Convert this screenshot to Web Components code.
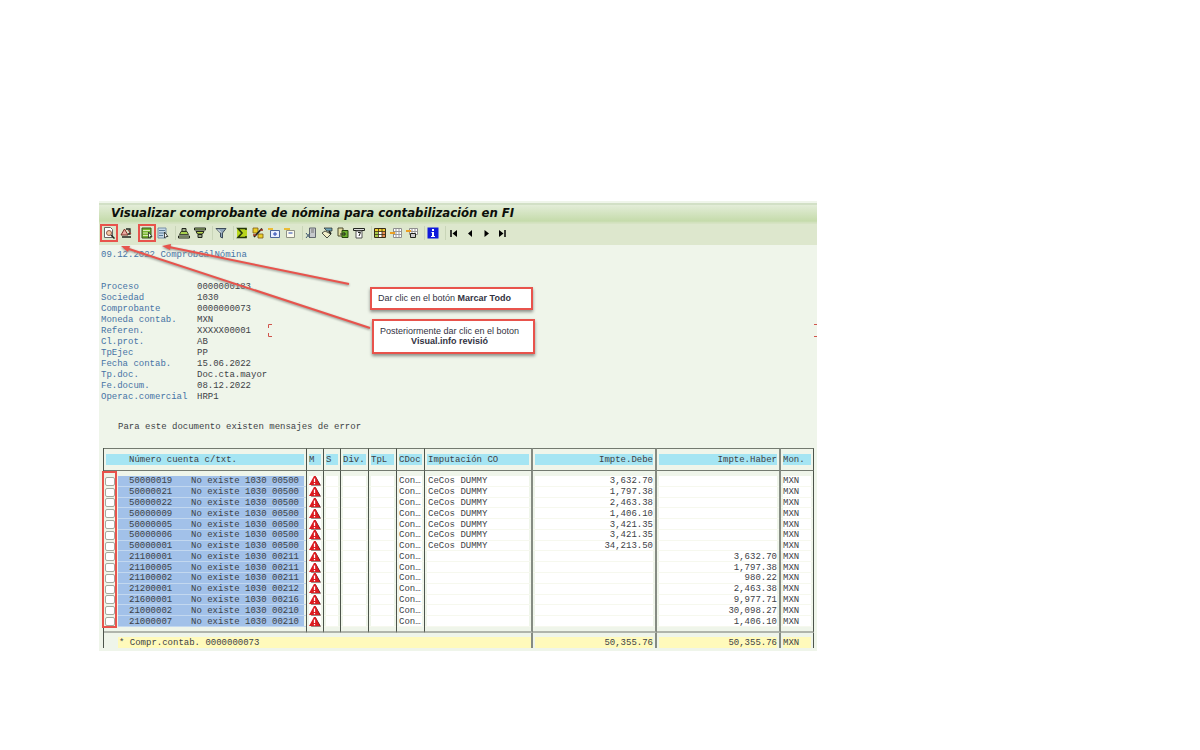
<!DOCTYPE html>
<html lang="es">
<head>
<meta charset="utf-8">
<title>Visualizar comprobante de nómina para contabilización en FI</title>
<style>
  html { background: #fff; }
  body {
    margin: 0;
    display: grid;
    grid-template-columns: 99fr 718fr 383fr;
    padding: 201px 0 96px;
    font-family: "Liberation Mono", monospace;
    font-size: 9px;
    line-height: 11px;
    color: #3d4246;
  }
  voucher-window { grid-column: 2; }
</style>
</head>
<body>
<voucher-window>
  <title-bar slot="title">Visualizar comprobante de nómina para contabilización en FI</title-bar>
  <tool-bar slot="tools"></tool-bar>
  <voucher-header></voucher-header>
  <posting-table></posting-table>
  <red-arrows slot="notes"></red-arrows>
  <note-box slot="notes" class="first">Dar clic en el botón <b>Marcar Todo</b></note-box>
  <note-box slot="notes" class="second">Posteriormente dar clic en el boton<br><b>Visual.info revisió</b></note-box>
</voucher-window>

<script>
class BaseElement extends HTMLElement {
  connectedCallback() {
    if (this.shadowRoot) return;
    this.attachShadow({ mode: "open" }).innerHTML = this.render();
  }
}

customElements.define("voucher-window", class extends BaseElement {
  render() {
    return `<style>
      :host { display: block; position: relative; background: #eff5ea; }
      .body { padding: 5px 3px 3px 2px; }
      ::slotted(note-box) { position: absolute; }
      ::slotted(.first) { left: 271px; top: 86px; }
      ::slotted(.second) { left: 273px; top: 118px; text-align: center; }
    </style>
    <slot name="title"></slot><slot name="tools"></slot>
    <div class="body"><slot></slot></div>
    <slot name="notes"></slot>`;
  }
});

customElements.define("title-bar", class extends BaseElement {
  render() {
    return `<style>
      :host { display: block; padding-top: 2px; }
      h1 {
        margin: 0; padding-left: 12px; box-sizing: border-box; height: 21px;
        font: italic bold 13px/20px "DejaVu Sans Condensed", "DejaVu Sans", sans-serif; color: #0c0f0a; white-space: nowrap;
        background: linear-gradient(#d2e0c6 0 2px, #e3edd8 2px, #c5dbab 18px, #d6e3c3 20px);
      }
    </style><h1><slot></slot></h1>`;
  }
});

const K = "#22261f";
const grid = (x, y, w, h, c) =>
  `<path d="M${x} ${y}h${w}v${h}h-${w}z" fill="#fff" stroke="${c}"/>`;
const ICONS = {
  "Visual.info revisión": `<path d="M1.500 .5h6l2 2v8h-8z" fill="#fff" stroke="#666"/><circle cx="6" cy="6" r="2.500" fill="#f6c9a4" stroke="#8a5c48"/><path d="M8 8l3.500 3.500" stroke="${K}" stroke-width="1.500"/>`,
  "Mensajes": `<path d="M1 8L4.500 2 8 8z" fill="#e9a8a0" stroke="#7b3028"/><path d="M6 2h4v5H8M2 10h9" fill="none" stroke="${K}" stroke-width="1.300"/><path d="M8 3l3 4" stroke="#a83832"/>`,
  "Marcar todo": `<path d="M1 1h9v10H1z" fill="#77b52f" stroke="#39541d"/><path d="M2 3.500h7M2 6h5M2 8.500h5" stroke="#d8ecb4"/><path d="M7.500 5v6l1.500-1.500h2z" fill="#fff" stroke="${K}" stroke-width=".8"/>`,
  "Desmarcar todo": `<path d="M1 1h8v10H1z" fill="#c5d8e6" stroke="#7890a4"/><path d="M2 3.500h6M2 6h5M2 8.500h4" stroke="#587a96"/><path d="M7.500 5v6l1.500-1.500h2z" fill="#fff" stroke="${K}" stroke-width=".8"/>`,
  "Orden ascendente": `<path d="M4 1.500h4v3H4z" fill="#9cad89" stroke="${K}"/><path d="M3 4.500h6l1.500 3h-9z" fill="#a8d04e" stroke="${K}" stroke-width=".8"/><path d="M.5 9h11v2H.5z" fill="#c8dca8" stroke="${K}"/>`,
  "Orden descendente": `<path d="M.5 1h11v2H.5z" fill="#a8c878" stroke="${K}"/><path d="M2 4.500h8l-1.500 2.500h-5z" fill="#b9d84e" stroke="${K}"/><path d="M4 7.500h4v3H4z" fill="#9cad89" stroke="${K}"/>`,
  "Filtro": `<path d="M1 1.500h10L7.500 6v5l-2-1V6z" fill="#8ea5b8" stroke="#3d4c5a"/><path d="M3 2.500l3 3" stroke="#fff"/>`,
  "Total": `<path d="M1 1h10v10H1z" fill="#b8d61c"/><path d="M10 3V1.500H2L6 6l-4 4.500h8V9" fill="none" stroke="#26380c" stroke-width="1.600"/>`,
  "Subtotal": `<path d="M1 1h5v5H1zM6 7h5v4H6z" fill="#e9cf28" stroke="#7d5913" stroke-width=".8"/><path d="M2 10L10 1.500" stroke="${K}" stroke-width="1.800"/><path d="M8 3h3M1 8h3" stroke="#9a321f" stroke-width="1.500"/>`,
  "Expandir": `<path d="M0 1h5v2H0z" fill="#eabc36"/><path d="M2.500 3.500h9v7h-9z" fill="#e9f0ff" stroke="#4b6598"/><path d="M7 5v4M5 7h4" stroke="#2647b1"/>`,
  "Comprimir": `<path d="M0 1h6v2H0z" fill="#eabc36"/><path d="M2.500 3.500h8v7h-8z" fill="#fbfbed" stroke="#8f9285"/><path d="M4.500 6h4" stroke="#2647b1"/>`,
  "Vista": `<path d="M4.500 1h6v9.500h-6z" fill="#c6c9cc" stroke="#62686e"/><path d="M6 3h3M6 5h3" stroke="#777"/><path d="M1 6l4 5M5 6l-4 5" stroke="#3e5970"/>`,
  "Enviar": `<path d="M3 1h8v3H6z" fill="#70a6ba" stroke="${K}" stroke-width=".7"/><path d="M1 6l3-2 6 3-4 4z" fill="#f1eec7" stroke="${K}" stroke-width=".8"/><path d="M8 4l2 3" stroke="${K}" stroke-width="1.500"/>`,
  "Exportar": `<path d="M1 1h5v8H1z" fill="#e4e0a4" stroke="#4a4a2c"/><path d="M5 3.500h6v7H5z" fill="#6aaf2c" stroke="#27460f"/><path d="M3 7h5M6.500 5l2 2-2 2" stroke="${K}" fill="none"/>`,
  "Plantilla": `<path d="M.5 1.500h11v2H.5z" fill="#ddd" stroke="${K}"/><path d="M3 4h6v7H3z" fill="#fff" stroke="#555"/><path d="M5 5.500h2.500L6 9" fill="none" stroke="${K}"/>`,
  "Layout": grid(.5, 1.500, 11, 9, "#382e18") + `<path d="M1 2h10v3H1z" fill="#f5d232"/><path d="M1 5h3v5H1z" fill="#a8cc48"/><path d="M8 5h3v5H8z" fill="#e98f54"/><path d="M4.500 1v10M8 1v10M0 4.500h12M0 7.500h12" stroke="#382e18" stroke-width=".8"/>`,
  "Seleccionar layout": grid(3.500, 1.500, 8, 9, "#8e8e8e") + `<path d="M6 2v8M9 2v8M4 4.500h7M4 7.500h7" stroke="#999"/><path d="M0 5h5v2H0z" fill="#ec9f22"/>`,
  "Grabar layout": grid(3.500, 1.500, 8, 6, "#8e8e8e") + `<path d="M6 2v5M9 2v5M4 4.500h7" stroke="#999"/><path d="M0 3h5v2H0z" fill="#ec9f22"/><path d="M4.500 6.500h5v4h-5z" fill="#ccc" stroke="${K}"/>`,
  "Información": `<path d="M.5 .5h11v11H.5z" fill="#0f19db"/><path d="M5 2h2v2H5zM4.500 5H7v4h1v1H4V9h1V6h-.500z" fill="#fff"/>`,
  "Primera columna": `<path d="M3 3v7" stroke="#000" stroke-width="1.500"/><path d="M9 3v7L4.500 6.500z"/>`,
  "Columna anterior": `<path d="M8 3v7L4 6.500z"/>`,
  "Columna siguiente": `<path d="M4.500 3v7l4.500-3.500z"/>`,
  "Última columna": `<path d="M9 3v7" stroke="#000" stroke-width="1.500"/><path d="M3 3v7l4.500-3.500z"/>`
};
const GROUPS = [2, 2, 2, 1, 4, 4, 3, 1, 4];

customElements.define("tool-bar", class extends BaseElement {
  render() {
    const names = Object.keys(ICONS);
    const marked = ["Visual.info revisión", "Marcar todo"];
    const groups = GROUPS.map(n => `<div class="group">${names.splice(0, n).map(name =>
      `<button type="button" aria-label="${name}" class="${marked.includes(name) ? "marked" : ""}"><svg viewBox="0 0 12 12" width="12" height="12">${ICONS[name]}</svg></button>`
    ).join("")}</div>`).join("");
    return `<style>
      :host { display: flex; gap: 5px; height: 18px; padding: 0 0 3px 2px; background: #dde7cd; }
      .group { display: flex; align-items: center; }
      .group:nth-child(-n+2) { gap: 1px; }
      .group + .group { box-shadow: -3px 0 0 -2px #c9d5b8; }
      button { position: relative; width: 16px; height: 18px; padding: 0 2px; border: 0; background: none; display: grid; place-items: center; }
      .marked::after { content: ""; position: absolute; inset: 0 -1px; border: 2px solid #e8534c; }
      svg { display: block; }
    </style>${groups}`;
  }
});

customElements.define("voucher-header", class extends BaseElement {
  render() {
    const rows = [
      ["Proceso", "0000000183"], ["Sociedad", "1030"], ["Comprobante", "0000000073"],
      ["Moneda contab.", "MXN"], ["Referen.", "XXXXX00001"], ["Cl.prot.", "AB"],
      ["TpEjec", "PP"], ["Fecha contab.", "15.06.2022"], ["Tp.doc.", "Doc.cta.mayor"],
      ["Fe.docum.", "08.12.2022"], ["Operac.comercial", "HRP1"]
    ];
    return `<style>
      :host { display: block; }
      p { margin: 0; white-space: pre; }
      .date, dt { color: #4673a5; }
      dl { display: grid; grid-template-columns: 96px 1fr; grid-auto-rows: 1fr; align-items: center; height: 118px; margin: 21px 0 22px; }
      dd, dt { margin: 0; white-space: nowrap; }
      .error { padding-left: 17px; margin-bottom: 15px; }
    </style>
    <p class="date">09.12.2022 ComprobCálNómina</p>
    <dl>${rows.map(([a, b]) => `<dt>${a}</dt><dd>${b}</dd>`).join("")}</dl>
    <p class="error">Para este documento existen mensajes de error</p>`;
  }
});

customElements.define("error-sign", class extends BaseElement {
  render() {
    return `<style>:host { display: block; width: 12px; height: 10px; } svg { display: block; }</style>
    <svg viewBox="0 0 12 10" width="12" height="10" role="img" aria-label="Error">
      <path d="M6.500 0L12 9.500H2z" fill="#3c1512"/><path d="M5 0h1.500L11 9H0z" fill="#dc1b20"/>
      <path d="M5.500 2.500v3.500M5.500 7v1.300" stroke="#fff" stroke-width="1.300"/></svg>`;
  }
});

const POSTINGS = [
  ["50000019", "00500", "3,632.70", ""], ["50000021", "00500", "1,797.38", ""],
  ["50000022", "00500", "2,463.38", ""], ["50000009", "00500", "1,406.10", ""],
  ["50000005", "00500", "3,421.35", ""], ["50000006", "00500", "3,421.35", ""],
  ["50000001", "00500", "34,213.50", ""], ["21100001", "00211", "", "3,632.70"],
  ["21100005", "00211", "", "1,797.38"], ["21100002", "00211", "", "980.22"],
  ["21200001", "00212", "", "2,463.38"], ["21600001", "00216", "", "9,977.71"],
  ["21000002", "00210", "", "30,098.27"], ["21000007", "00210", "", "1,406.10"]
];
/* 0 leaves the account column the width that the others do not take */
const COLUMN_WIDTHS = [14, 0, 17, 17, 28, 28, 28, 108, 124, 124, 33];

customElements.define("posting-table", class extends BaseElement {
  render() {
    const cols = COLUMN_WIDTHS.map(w => w ? `<col style="width:${w}px">` : "<col>").join("");
    const gap = name => `<tr class="gap ${name}" aria-hidden="true">${"<td></td>".repeat(7)}${'<td class="wide"></td>'.repeat(3)}<td></td></tr>`;
    const body = POSTINGS.map(([acc, code, debit, credit]) => `<tr>
      <td class="pick"><input type="checkbox" aria-label="Marcar ${acc}"></td>
      <td class="account"><span>${acc}</span>No existe 1030 ${code}</td>
      <td><error-sign></error-sign></td><td></td><td></td><td></td>
      <td>Con…</td><td class="wide">${debit ? "CeCos DUMMY" : ""}</td>
      <td class="wide num">${debit}</td><td class="wide num">${credit}</td><td>MXN</td></tr>`).join("");
    return `<style>
      :host { display: block; position: relative; margin-left: 2px; --thin: #4c544b; --thick: #858b82; --fill: #fff; }
      table { width: 100%; height: 200px; table-layout: fixed; border-spacing: 0; border-left: 1px solid var(--thin); }
      td, th {
        padding: 0 2px; font-weight: normal; text-align: left; white-space: nowrap; line-height: 10px;
        border-right: 1px solid var(--thin);
        background: linear-gradient(var(--fill), var(--fill)) center / calc(100% - 4px) 100% no-repeat;
      }
      .wide { border-right: 2px solid var(--thick); padding-left: 3px; }
      .num { text-align: right; }
      tbody td { box-shadow: inset 0 -1px #f6f8ee; }
      thead th { --fill: #a5e5f3; height: 20px; padding-top: 1px; border-top: 1px solid #737a70; border-bottom: 1px solid #737a70; background-size: calc(100% - 4px) 11px; }
      thead .first { padding-left: 25px; }
      .pick { border-right: 0; padding: 0 2px 0 1px; --fill: transparent; box-shadow: none; }
      .account { --fill: #a2c1e9; padding-left: 11px; background-size: 100% 100%; box-shadow: inset 0 -1px #c3d8ef, inset -2px 0 #eff5ea; }
      .account span { display: inline-block; width: 62px; }
      input { display: block; appearance: none; box-sizing: border-box; width: 10px; height: 9px; margin: 0; border: 1px solid #a4aaa0; border-radius: 2px; background: #fff; }
      .gap td { --fill: transparent; height: 5px; padding: 0; box-shadow: none; line-height: 0; }
      .gap td:first-child { border-right: 0; }
      .gap.end td { height: 4px; border-bottom: 2px solid #b0b5ac; }
      tfoot td { --fill: #fffabb; height: 11px; padding-top: 4px; background-size: calc(100% - 4px) 11px; background-position: center bottom; }
      tfoot .total { padding-left: 15px; background-size: calc(100% - 14px) 11px; background-position: right bottom; }
      .outline { position: absolute; left: -1px; top: 23px; bottom: 20px; width: 15px; box-sizing: border-box; border: 2px solid #e8534c; pointer-events: none; }
    </style>
    <table>
      <colgroup>${cols}</colgroup>
      <thead><tr><th class="first" colspan="2">Número cuenta c/txt.</th><th>M</th><th>S</th><th>Div.</th><th>TpL</th><th>CDoc</th><th class="wide">Imputación CO</th><th class="wide num">Impte.Debe</th><th class="wide num">Impte.Haber</th><th>Mon.</th></tr></thead>
      <tbody>${gap("start")}${body}${gap("end")}</tbody>
      <tfoot><tr><td class="wide total" colspan="8">* Compr.contab. 0000000073</td><td class="wide num">50,355.76</td><td class="wide num">50,355.76</td><td>MXN</td></tr></tfoot>
    </table>
    <div class="outline"></div>`;
  }
});

customElements.define("note-box", class extends BaseElement {
  render() {
    return `<style>
      :host { display: block; box-sizing: border-box; width: 163px; padding: 4px 6px 5px; border: 2px solid #e8534c; background: #fff;
        font: 9px/10px "Liberation Sans", sans-serif; color: #33323f; box-shadow: 0 2px 3px #8b8f88; white-space: nowrap; }
      :host(.second) { padding: 5px 12px 6px 4px; }
    </style><slot></slot>`;
  }
});

customElements.define("red-arrows", class extends BaseElement {
  render() {
    return `<style>
      :host { position: absolute; inset: 0; pointer-events: none; }
      .arrows { position: absolute; left: 0; top: 0; filter: drop-shadow(0 1px 1px #8b8f88); }
      .corner { position: absolute; top: 123px; }
      .left { left: 169px; } .right { right: 0; }
    </style>
    <svg class="arrows" width="280" height="140" aria-hidden="true">
      <path d="M250 83L70 46M271 127L30 48" stroke="#e8534c" stroke-width="2"/>
      <path d="M63 45l9-2-1 6zM22 45l9 0-2 6z" fill="#e8534c"/>
    </svg>
    <svg class="corner left" width="4" height="13" aria-hidden="true"><path d="M4 .5H.5V4M.5 9v3.500H4" fill="none" stroke="#d0544c"/></svg>
    <svg class="corner right" width="3" height="13" aria-hidden="true"><path d="M0 .5h3M0 12.500h3" stroke="#d0544c"/></svg>`;
  }
});
</script>
</body>
</html>
